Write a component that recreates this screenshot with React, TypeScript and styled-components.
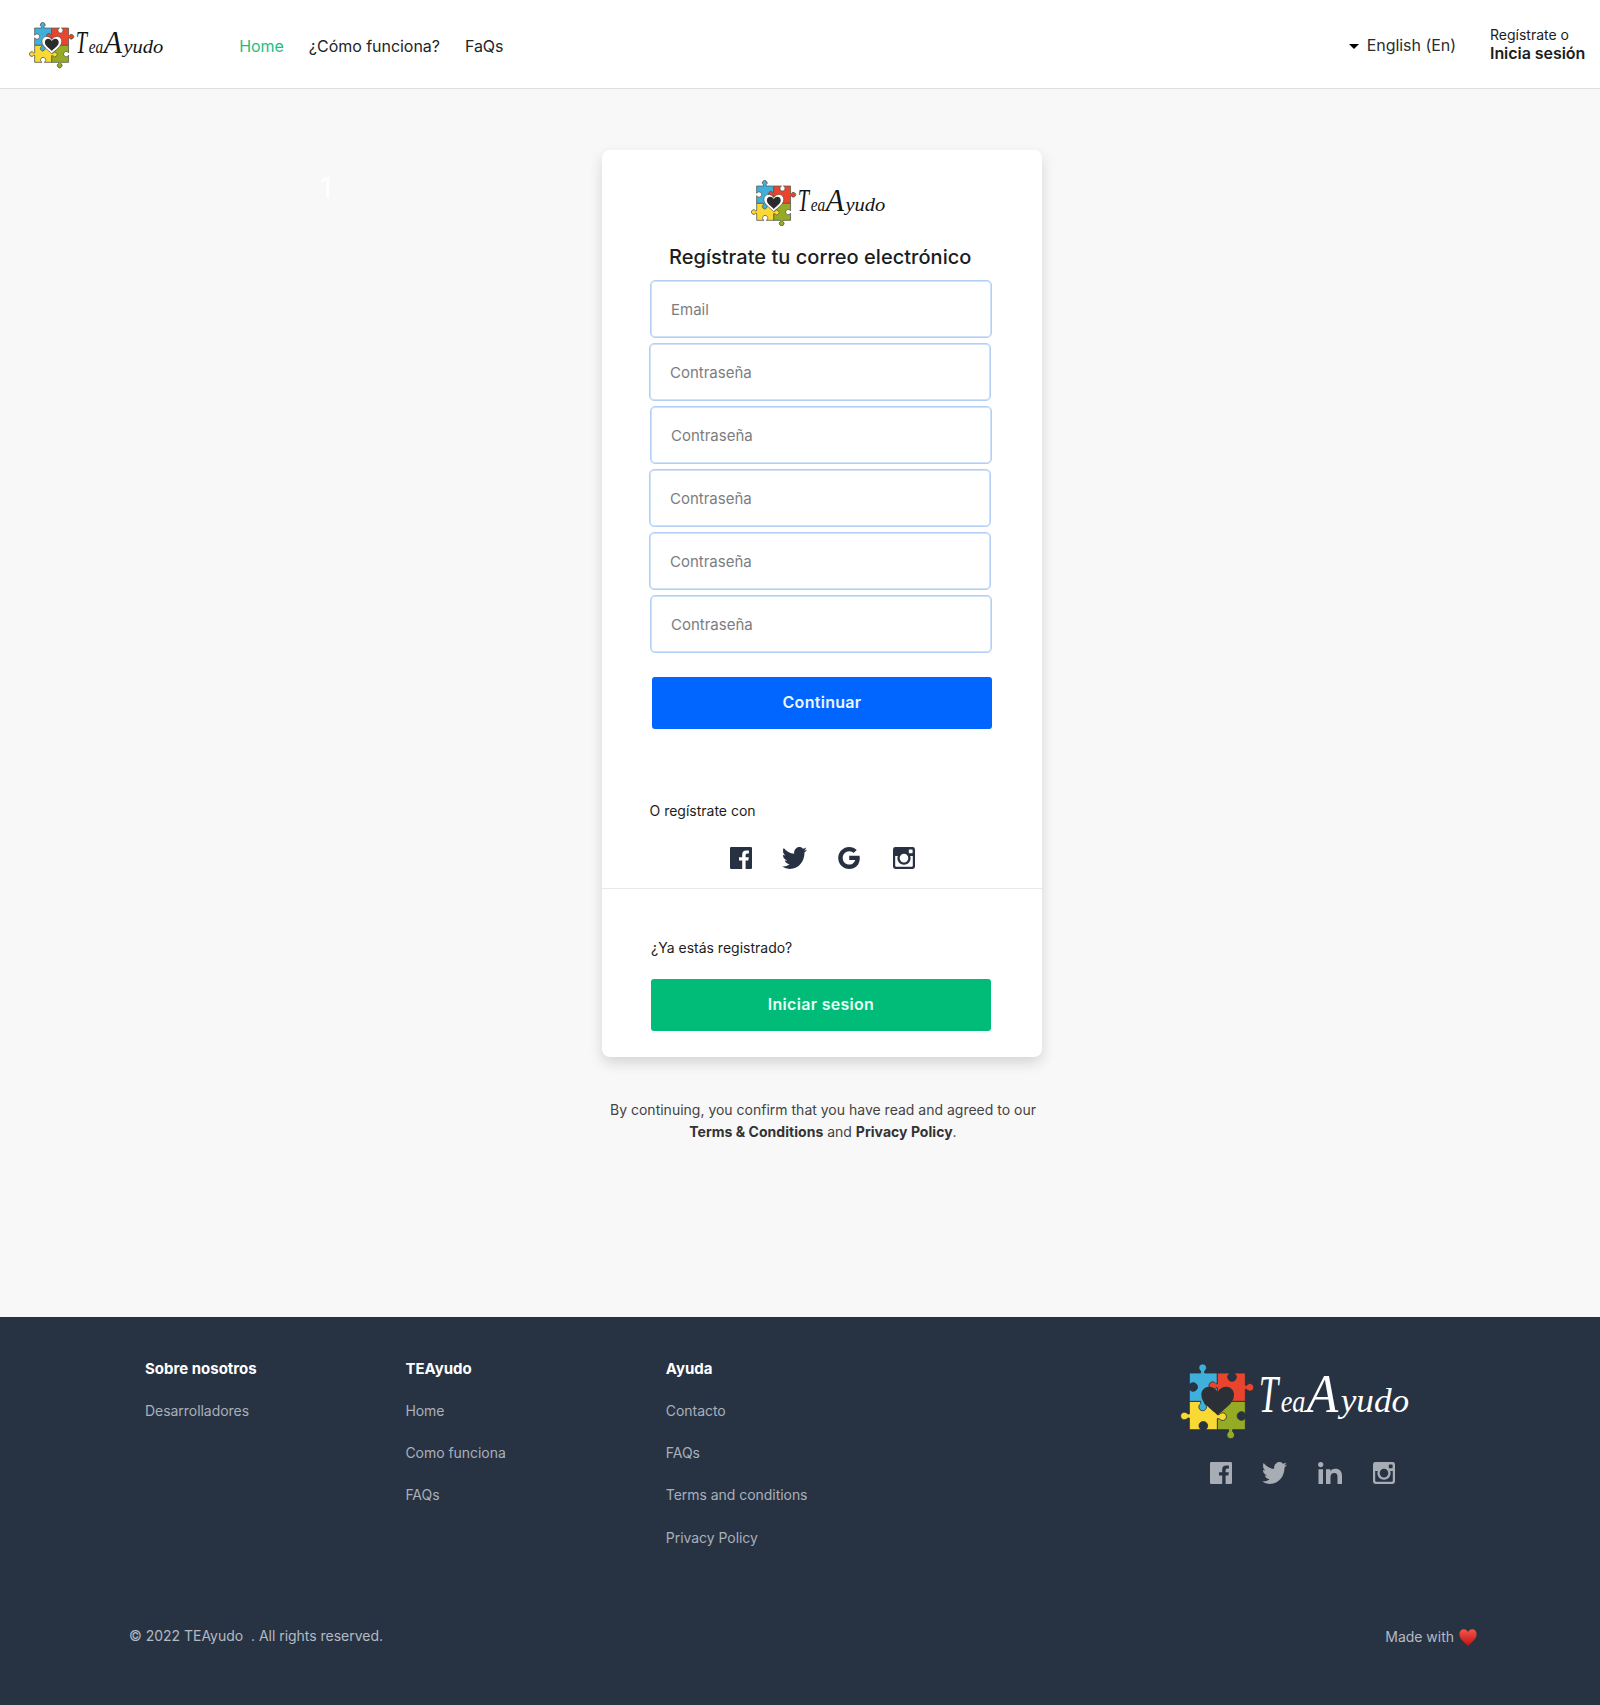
import React from 'react';
import styled, { createGlobalStyle } from 'styled-components';

const GlobalStyle = createGlobalStyle`
  *, *::before, *::after { box-sizing: border-box; }
  body {
    margin: 0;
    background: #f8f8f8;
    font-family: Inter, "Liberation Sans", sans-serif;
    color: #1b1d21;
  }
  a { color: inherit; text-decoration: none; }
`;

const Page = styled.div`
  display: flex;
  flex-direction: column;
  width: 1600px;
  height: 1705px;
  overflow: hidden;
`;

/* ---------- Header ---------- */

const Header = styled.header`
  display: flex;
  align-items: center;
  height: 89px;
  padding: 0 15px 0 29px;
  background: #fff;
  border-bottom: 1px solid #dedede;
`;

const HeaderLogo = styled.a`
  display: flex;
  margin-top: 3px;
`;

const Nav = styled.nav`
  display: flex;
  gap: 25px;
  margin: 3px 0 0 74px;
`;

const NavLink = styled.a<{ $active?: boolean }>`
  font-size: 16px;
  line-height: 20px;
  letter-spacing: -0.04px;
  color: ${(p) => (p.$active ? '#1fbd80' : '#222428')};
`;

const HeaderTools = styled.div`
  display: flex;
  align-items: center;
  margin-left: auto;
`;

const Language = styled.button`
  display: flex;
  align-items: center;
  gap: 8px;
  padding: 0;
  margin: 2px 34px 0 0;
  border: 0;
  background: none;
  font: 400 16px/20px Inter, sans-serif;
  letter-spacing: -0.04px;
  color: #2b2d31;
`;

const Caret = styled.span`
  width: 0;
  height: 0;
  margin-top: 2px;
  border: 5px solid transparent;
  border-top-color: #000;
  border-bottom: 0;
`;

const Account = styled.a`
  display: flex;
  flex-direction: column;
  width: 95px;
  white-space: nowrap;
  font-size: 14px;
  line-height: 18px;
`;

const AccountStrong = styled.strong`
  font-size: 16px;
  line-height: 18px;
  font-weight: 600;
  letter-spacing: -0.05px;
`;

/* ---------- Main ---------- */

const Main = styled.main`
  position: relative;
  display: flex;
  flex-direction: column;
  align-items: center;
  height: 1228px;
  padding: 61px 0 0 44px;
`;

const StepMark = styled.span`
  position: absolute;
  left: 320px;
  top: 82px;
  font-size: 28px;
  line-height: 34px;
  color: #fff;
`;

const Card = styled.section`
  display: flex;
  flex-direction: column;
  width: 440px;
  height: 907px;
  padding-top: 30px;
  border-radius: 8px;
  background: #fff;
  box-shadow: 0 6px 14px rgba(0, 0, 0, 0.14);
`;

const LogoSlot = styled.div`
  display: flex;
  height: 47px;
  padding-left: 149px;
`;

const Title = styled.h1`
  margin: 18px 0 11px 67px;
  font-size: 20px;
  line-height: 24px;
  font-weight: 500;
  letter-spacing: 0.03px;
  white-space: nowrap;
`;

const Fields = styled.div`
  display: flex;
  flex-direction: column;
  gap: 5px;
`;

const Field = styled.input<{ $shift?: boolean }>`
  width: 342px;
  height: 58px;
  margin-left: ${(p) => (p.$shift ? 47 : 48)}px;
  padding: 0 20px;
  border: 1px solid #b3cff6;
  border-radius: 5px;
  background: #fff;
  box-shadow: inset 0 0 0 1px #d0e1fa;
  font: 400 15px/20px Inter, sans-serif;
  outline: 0;
  &::placeholder { color: #7b7d81; opacity: 1; }
`;

const Button = styled.button<{ $tone: 'blue' | 'green' }>`
  width: 340px;
  height: 52px;
  margin: ${(p) => (p.$tone === 'blue' ? '24px 0 0 50px' : '21px 0 0 49px')};
  padding: 0 0 2px;
  border: 0;
  border-radius: 3px;
  background: ${(p) => (p.$tone === 'blue' ? '#0066ff' : '#00bc78')};
  color: ${(p) => (p.$tone === 'blue' ? '#eef5ff' : '#e6fff5')};
  font: 600 16px/20px Inter, sans-serif;
  letter-spacing: 0.3px;
`;

const Caption = styled.p<{ $top: number; $left: number }>`
  margin: ${(p) => p.$top}px 0 0 ${(p) => p.$left}px;
  font-size: 14px;
  line-height: 20px;
`;

const SocialRow = styled.div<{ $footer?: boolean }>`
  display: flex;
  align-items: center;
  margin: ${(p) => (p.$footer ? '22px 0 0 30px' : '26px 0 0 128px')};
  color: ${(p) => (p.$footer ? '#a8adb5' : '#273142')};
`;

const SocialLink = styled.a<{ $gap?: number }>`
  display: flex;
  margin-right: ${(p) => p.$gap ?? 0}px;
`;

const Divider = styled.hr`
  width: 100%;
  height: 1px;
  margin: 19px 0 0;
  border: 0;
  background: #e9e9e9;
`;

const Terms = styled.p`
  width: 440px;
  margin: 42px 0 0;
  padding-left: 2px;
  text-align: center;
  white-space: nowrap;
  font-size: 14px;
  line-height: 22px;
  color: #434343;
  strong { font-weight: 700; letter-spacing: 0.03px; color: #333; }
`;

/* ---------- Footer ---------- */

const Footer = styled.footer`
  flex: 1;
  display: flex;
  flex-direction: column;
  background: #273343;
`;

const FooterTop = styled.div`
  display: flex;
  height: 309px;
  padding: 42px 0 0 145px;
`;

const Column = styled.div`
  display: flex;
  flex-direction: column;
  width: 260.4px;
  gap: 22.13px;
`;

const ColumnTitle = styled.h2`
  margin: 0;
  font-size: 15px;
  line-height: 20px;
  font-weight: 700;
  color: #fff;
`;

const FooterLink = styled.a`
  font-size: 14px;
  line-height: 20px;
  letter-spacing: -0.04px;
  color: #a9b0b9;
`;

const Brand = styled.div`
  display: flex;
  flex-direction: column;
  margin: 4px 0 0 253.5px;
`;

const FooterBottom = styled.div`
  display: flex;
  justify-content: space-between;
  padding: 0 123px 0 129px;
  font-size: 14px;
  line-height: 20px;
  letter-spacing: -0.02px;
  color: #b4bac2;
  white-space: pre;
`;

const MadeWith = styled.span`
  display: flex;
  align-items: center;
  gap: 5px;
  margin-top: 1px;
`;

/* ---------- Drawings ---------- */

const heart =
  'M173 195C152 174 124 160 124 134C124 107 157 100 173 125C189 100 222 107 222 134C222 160 194 174 173 195Z';

function Logo({ dark = false }: { dark?: boolean }) {
  const ink = dark ? '#fff' : '#111418';
  const edge = dark ? '#26303a' : '#5a5a50';
  return (
    <svg
      width={dark ? 231.67 : 136.2}
      height={dark ? 76.67 : 46.4}
      viewBox={dark ? '60 38 695 230' : '60 38 675 230'}
    >
      <g stroke={edge} strokeWidth={dark ? 2.5 : 4} strokeLinejoin="round">
        <path fill="#96ab25" d="M172 153H256V191A13 13 0 1 0 256 203V238H218V244A11.500 11.500 0 1 1 206 244V238H172Z" />
        <path fill="#fbd935" d="M88 153H172V193H178A11.500 11.500 0 1 1 178 205H172V238H136A13 13 0 1 0 124 238H88V203H83A11.500 11.500 0 1 1 83 191H88Z" />
        <path fill="#3fb0dc" d="M88 68H122V62A11.500 11.500 0 1 1 134 62V68H172V153H134V160A11.500 11.500 0 1 1 122 160V153H88V116A13 13 0 1 0 88 104Z" />
        <path fill="#e8442e" d="M172 68H211A13 13 0 1 0 221 68H256V105H260A11.500 11.500 0 1 1 260 117H256V153H172V112H168A11.500 11.500 0 1 1 168 100H172Z" />
      </g>
      {dark ? (
        <path d={heart} fill="#2b3037" />
      ) : (
        <>
          <path d={heart} fill="#fff" stroke="#4a4a45" strokeWidth="3" />
          <path d={heart} fill="#2b2b2b" transform="translate(173 149) scale(.7) translate(-173 -149)" />
        </>
      )}
      <g
        fill={ink}
        fontFamily='"Liberation Serif", serif'
        fontStyle="italic"
        transform={dark ? undefined : 'translate(8 14) scale(.96)'}
      >
        <text fontSize="158" transform="translate(296 184) scale(.66 1)">T</text>
        <text fontSize="92" transform="translate(362 184) scale(.86 1)">ea</text>
        <text fontSize="166" transform="translate(440 184) scale(.93 1)">A</text>
        <text fontSize="98" transform="translate(542 184) scale(1.08 1)">yudo</text>
      </g>
    </svg>
  );
}

const FacebookIcon = () => (
  <svg width="22" height="22" viewBox="0 0 22 22" fill="currentColor">
    <path d="M1.2 0H20.8Q22 0 22 1.2V20.8Q22 22 20.8 22H15.6V13.6H18.3L18.8 10.3H15.6V8.2Q15.6 6.6 17.2 6.6H18.9V3.4H16.2Q12.2 3.4 12.2 7.5V10.3H9V13.6H12.2V22H1.2Q0 22 0 20.8V1.2Q0 0 1.2 0Z" />
  </svg>
);

const TwitterIcon = () => (
  <svg width="25" height="22" viewBox="0 2.2 24 19.6" preserveAspectRatio="none" fill="currentColor">
    <path d="M23.953 4.57a10 10 0 01-2.825.775 4.958 4.958 0 002.163-2.723c-.951.555-2.005.959-3.127 1.184a4.92 4.92 0 00-8.384 4.482C7.69 8.095 4.067 6.13 1.64 3.162a4.822 4.822 0 00-.666 2.475c0 1.71.87 3.213 2.188 4.096a4.904 4.904 0 01-2.228-.616v.06a4.923 4.923 0 003.946 4.827 4.996 4.996 0 01-2.212.085 4.936 4.936 0 004.604 3.417 9.867 9.867 0 01-6.102 2.105c-.39 0-.779-.023-1.17-.067a13.995 13.995 0 007.557 2.209c9.053 0 13.998-7.496 13.998-13.985 0-.21 0-.42-.015-.63A9.935 9.935 0 0024 4.59z" />
  </svg>
);

const GoogleIcon = () => (
  <svg width="22" height="22" viewBox="0 0 24 24" fill="currentColor">
    <path d="M12.24 9.6V14.2h6.5c-.5 2.2-2.6 5-6.5 5-4.095 0-7.1-3.2-7.1-7.2s3.1-7.3 7.1-7.3c2.33 0 3.7.9 4.7 1.8l3.5-3.3C18.189 1.186 15.479 0 12.24 0c-6.635 0-12 5.365-12 12s5.365 12 12 12c6.926 0 11.52-4.869 11.52-11.726 0-.788-.085-1.9-.25-2.674H12.24z" />
  </svg>
);

const InstagramIcon = () => (
  <svg width="22" height="22" viewBox="0 0 22 22" fill="currentColor" fillRule="evenodd">
    <path d="M2.4 0H19.6Q22 0 22 2.4V19.6Q22 22 19.6 22H2.4Q0 22 0 19.6V2.4Q0 0 2.4 0ZM2.2 9V18.8Q2.2 19.8 3.2 19.8H18.8Q19.8 19.8 19.8 18.8V9H17.2A6.6 6.6 0 1 1 4.8 9ZM11 6.8A4.3 4.3 0 1 0 11 15.4A4.3 4.3 0 1 0 11 6.8ZM16.4 2.4Q15.8 2.4 15.8 3V5.6Q15.8 6.2 16.4 6.2H19Q19.6 6.2 19.6 5.6V3Q19.6 2.4 19 2.4Z" />
  </svg>
);

const LinkedinIcon = () => (
  <svg width="24" height="22" viewBox="0 0 24 22" fill="currentColor">
    <circle cx="2.7" cy="2.6" r="2.6" />
    <path d="M.5 7.2H5V22H.5ZM8 7.2H12.3V9.2C13.2 7.700 14.800 6.800 16.900 6.800C22 6.800 24 9.500 24 14V22H19.500V14.700C19.500 12.300 18.700 10.900 16.500 10.900C13.800 10.900 12.500 12.500 12.500 15V22H8Z" />
  </svg>
);

const HeartIcon = () => (
  <svg width="18" height="17" viewBox="0 0 18 17">
    <defs>
      <linearGradient id="heartFill" x1="0" y1="0" x2="0" y2="1">
        <stop offset="0" stopColor="#f4544c" />
        <stop offset="1" stopColor="#bd1210" />
      </linearGradient>
    </defs>
    <path
      fill="url(#heartFill)"
      d="M9 17C6.500 14.200 .4 10.500 .4 5.200C.4 2 2.500 .3 4.800 .3C6.900 .3 8.300 1.500 9 3.200C9.700 1.500 11.100 .3 13.200 .3C15.500 .3 17.600 2 17.600 5.200C17.600 10.500 11.500 14.200 9 17Z"
    />
  </svg>
);

/* ---------- Page ---------- */

const fields = [
  { label: 'Email', type: 'email', shift: false },
  { label: 'Contraseña', type: 'password', shift: true },
  { label: 'Contraseña', type: 'password', shift: false },
  { label: 'Contraseña', type: 'password', shift: true },
  { label: 'Contraseña', type: 'password', shift: true },
  { label: 'Contraseña', type: 'password', shift: false },
];

const columns = [
  { title: 'Sobre nosotros', links: ['Desarrolladores'] },
  { title: 'TEAyudo', links: ['Home', 'Como funciona', 'FAQs'] },
  { title: 'Ayuda', links: ['Contacto', 'FAQs', 'Terms and conditions', 'Privacy Policy'] },
];

export default function App() {
  return (
    <Page>
      <GlobalStyle />
      <Header>
        <HeaderLogo href="#"><Logo /></HeaderLogo>
        <Nav>
          <NavLink href="#" $active>Home</NavLink>
          <NavLink href="#">¿Cómo funciona?</NavLink>
          <NavLink href="#">FaQs</NavLink>
        </Nav>
        <HeaderTools>
          <Language>
            <Caret />
            English (En)
          </Language>
          <Account href="#">
            Regístrate o
            <AccountStrong>Inicia sesión</AccountStrong>
          </Account>
        </HeaderTools>
      </Header>

      <Main>
        <StepMark>1</StepMark>
        <Card>
          <LogoSlot><Logo /></LogoSlot>
          <Title>Regístrate tu correo electrónico</Title>
          <Fields>
            {fields.map((f, i) => (
              <Field key={i} type={f.type} placeholder={f.label} $shift={f.shift} />
            ))}
          </Fields>
          <Button $tone="blue">Continuar</Button>
          <Caption $top={72} $left={47.5}>O regístrate con</Caption>
          <SocialRow>
            <SocialLink href="#" $gap={30}><FacebookIcon /></SocialLink>
            <SocialLink href="#" $gap={31}><TwitterIcon /></SocialLink>
            <SocialLink href="#" $gap={33}><GoogleIcon /></SocialLink>
            <SocialLink href="#"><InstagramIcon /></SocialLink>
          </SocialRow>
          <Divider />
          <Caption $top={49} $left={49}>¿Ya estás registrado?</Caption>
          <Button $tone="green">Iniciar sesion</Button>
        </Card>
        <Terms>
          By continuing, you confirm that you have read and agreed to our
          <br />
          <strong>Terms &amp; Conditions</strong> and <strong>Privacy Policy</strong>.
        </Terms>
      </Main>

      <Footer>
        <FooterTop>
          {columns.map((c) => (
            <Column key={c.title}>
              <ColumnTitle>{c.title}</ColumnTitle>
              {c.links.map((l) => (
                <FooterLink key={l} href="#">{l}</FooterLink>
              ))}
            </Column>
          ))}
          <Brand>
            <Logo dark />
            <SocialRow $footer>
              <SocialLink href="#" $gap={30}><FacebookIcon /></SocialLink>
              <SocialLink href="#" $gap={31}><TwitterIcon /></SocialLink>
              <SocialLink href="#" $gap={31}><LinkedinIcon /></SocialLink>
              <SocialLink href="#"><InstagramIcon /></SocialLink>
            </SocialRow>
          </Brand>
        </FooterTop>
        <FooterBottom>
          <span>{'© 2022 TEAyudo  . All rights reserved.'}</span>
          <MadeWith>
            Made with
            <HeartIcon />
          </MadeWith>
        </FooterBottom>
      </Footer>
    </Page>
  );
}
